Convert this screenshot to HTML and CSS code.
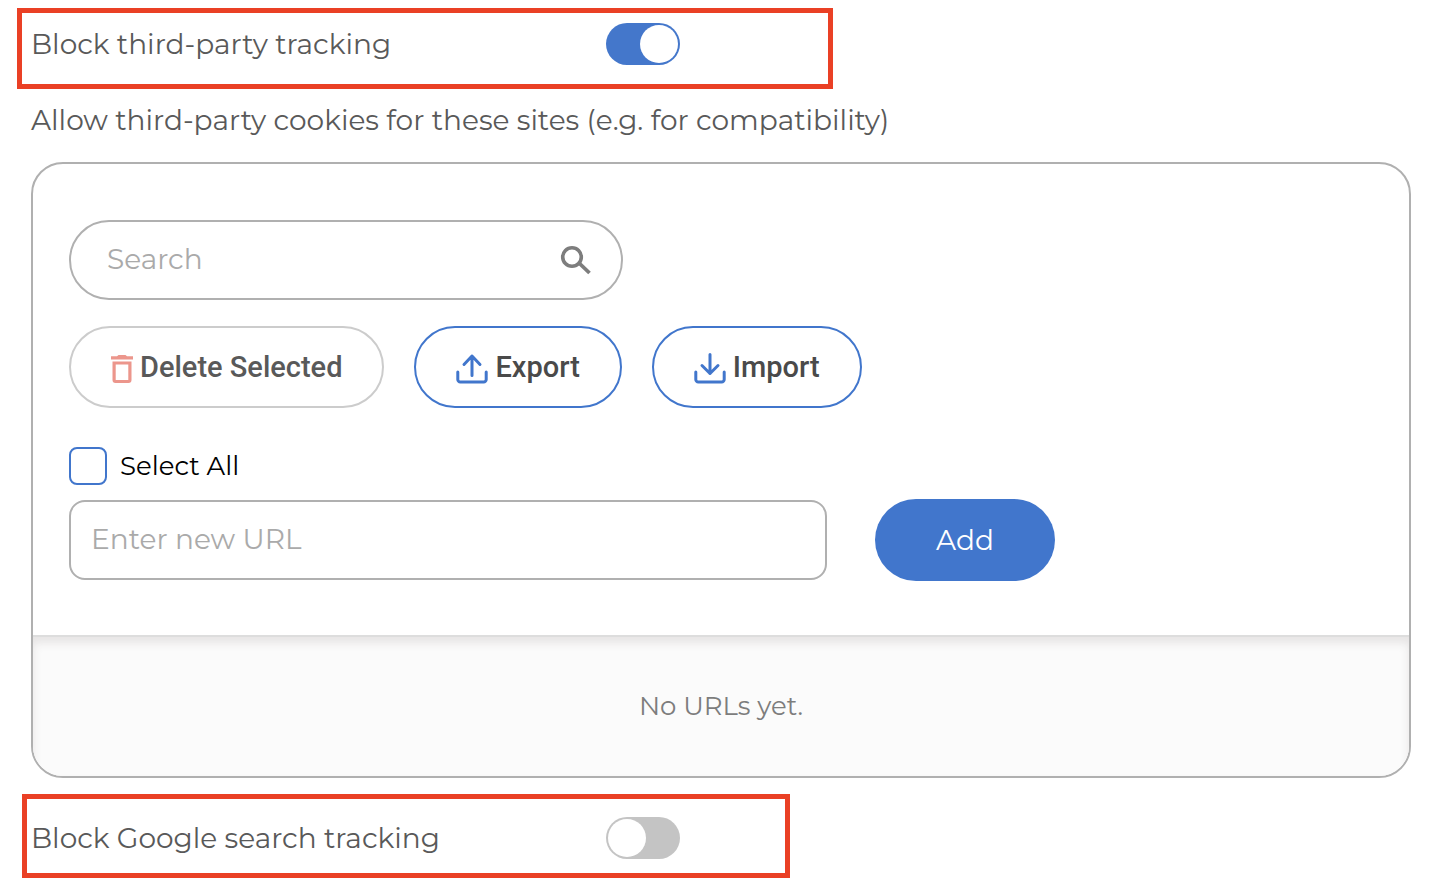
FILE: index.html
```html
<!DOCTYPE html>
<html lang="en">

<head>
  <meta charset="UTF-8">
  <meta name="viewport" content="width=device-width, initial-scale=1.0">
  <title>Tracking Settings</title>
  <link rel="stylesheet" href="styles.css">
</head>

<body>

  <!-- Third-party tracking -->
  <div class="setting setting-party">
    <label class="setting-label" for="block-party">Block third-party tracking</label>
    <input class="toggle" type="checkbox" id="block-party" checked>
  </div>

  <p class="caption">Allow third-party cookies for these sites (e.g. for compatibility)</p>

  <!-- Allowed sites -->
  <div class="panel">
    <div class="panel-tools">
      <div class="search">
        <input class="search-input" type="text" placeholder="Search" aria-label="Search">
        <svg class="search-icon" width="32" height="30" viewBox="0 0 32 30" fill="none" stroke="#7d7d7d">
          <circle cx="12" cy="12" r="9.3" stroke-width="3.6" />
          <path d="M18.5 17.5L29.5 28" stroke-width="3.8" />
        </svg>
      </div>

      <div class="actions">
        <button class="action-btn delete-btn">
          <svg width="22" height="28" viewBox="0 0 22 28" fill="#ec968c">
            <path fill-rule="evenodd" d="M6 1.2L7.5 0h7L16 1.2h6V4.6H0V1.2zM1.5 6.5h19V25a3 3 0 0 1-3 3h-13a3 3 0 0 1-3-3zM4.7 9.5V25h12.6V9.5z" />
          </svg>
          Delete Selected
        </button>
        <button class="action-btn">
          <svg width="32" height="32" viewBox="0 0 32 32" fill="none" stroke="#4176cc" stroke-width="3" stroke-linecap="round" stroke-linejoin="round">
            <path d="M1.8 19v7.5a2.500 2.500 0 0 0 2.500 2.500h23.400a2.500 2.500 0 0 0 2.500-2.500V19M16 22.500V3M8 11.500l8-8.500 8 8.500" />
          </svg>
          Export
        </button>
        <button class="action-btn">
          <svg width="32" height="32" viewBox="0 0 32 32" fill="none" stroke="#4176cc" stroke-width="3" stroke-linecap="round" stroke-linejoin="round">
            <path d="M1.8 19v7.5a2.500 2.500 0 0 0 2.500 2.500h23.400a2.500 2.500 0 0 0 2.500-2.500V19M16 1.500V20.500M8 12.500l8 8 8-8" />
          </svg>
          Import
        </button>
      </div>

      <div class="select-all">
        <input class="check" type="checkbox" id="select-all">
        <label for="select-all">Select All</label>
      </div>

      <div class="add-row">
        <input class="url-input" type="text" placeholder="Enter new URL" aria-label="Enter new URL">
        <button class="add-btn">Add</button>
      </div>
    </div>

    <div class="url-list">No URLs yet.</div>
  </div>

  <!-- Google search tracking -->
  <div class="setting setting-google">
    <label class="setting-label" for="block-google">Block Google search tracking</label>
    <input class="toggle" type="checkbox" id="block-google">
  </div>

</body>

</html>
```
FILE: styles.css
```css
* {
  box-sizing: border-box;
}

body {
  margin: 0;
  padding: 8px 25px 16px 17px;
  font-family: Montserrat, Inter, sans-serif;
  font-size: 28px;
  color: #595959;
  background-color: #fff;
}

input,
button {
  margin: 0;
  font-family: inherit;
  font-size: inherit;
}

.setting {
  display: flex;
  align-items: center;
  max-width: 100%;
  border: 5px solid #ea4025;
}

.setting-party {
  width: 816px;
  padding: 10px 9px 19px;
}

.setting-google {
  width: 768px;
  margin: 16px 0 0 5px;
  padding: 18px 4px 14px;
}

.setting-label {
  width: 575px;
}

.toggle {
  appearance: none;
  flex: none;
  display: flex;
  width: 74px;
  height: 42px;
  padding: 2px;
  border-radius: 21px;
  background-color: #c4c4c4;
  cursor: pointer;
}

.toggle::before {
  content: "";
  width: 38px;
  height: 38px;
  border-radius: 50%;
  background-color: #fff;
}

.toggle:checked {
  justify-content: flex-end;
  background-color: #4477cb;
}

.caption {
  margin: 11px 0 22px 14px;
  line-height: 40px;
}

.panel {
  margin-left: 14px;
  border: 2px solid #b0b0b0;
  border-radius: 32px;
  overflow: hidden;
}

.panel-tools {
  padding: 56px 36px 54px;
}

.search {
  display: flex;
  align-items: center;
  width: 554px;
  max-width: 100%;
  height: 80px;
  padding: 0 29px 0 36px;
  border: 2px solid #b0b0b0;
  border-radius: 40px;
}

.search-input {
  flex: 1;
  min-width: 0;
  padding: 0 0 2px;
  border: none;
  outline: none;
  background: none;
}

::placeholder {
  color: #aaa;
  opacity: 1;
}

.actions {
  display: flex;
  flex-wrap: wrap;
  gap: 30px;
  margin-top: 26px;
}

.action-btn {
  display: flex;
  align-items: center;
  gap: 7px;
  height: 82px;
  padding: 0 40px;
  border: 2px solid #4176cc;
  border-radius: 41px;
  background-color: #fff;
  color: #4a4a4a;
  font-family: Roboto, sans-serif;
  font-size: 29px;
  font-weight: 500;
  cursor: pointer;
}

.action-btn svg {
  margin-top: 3px;
}

.delete-btn {
  border-color: #ccc;
  color: #595959;
}

.select-all {
  display: flex;
  align-items: center;
  gap: 13px;
  height: 38px;
  margin-top: 39px;
  color: #000;
  font-size: 26px;
}

.check {
  appearance: none;
  width: 38px;
  height: 38px;
  border: 2px solid #4176cc;
  border-radius: 8px;
}

.check:checked {
  background-color: #4176cc;
}

.add-row {
  display: flex;
  align-items: center;
  gap: 48px;
  margin-top: 14px;
}

.url-input {
  width: 758px;
  min-width: 0;
  height: 80px;
  padding: 0 20px 2px;
  border: 2px solid #b0b0b0;
  border-radius: 16px;
}

.add-btn {
  flex: none;
  width: 180px;
  height: 82px;
  border: none;
  border-radius: 41px;
  background-color: #4176cc;
  color: #fff;
  cursor: pointer;
}

.url-list {
  padding: 49px 36px 50px;
  border-top: 2px solid #ddd;
  background-color: #fbfbfb;
  box-shadow: inset 0 6px 10px #e6e4e4;
  color: #7d7d7d;
  font-size: 26px;
  line-height: 40px;
  text-align: center;
}
```
